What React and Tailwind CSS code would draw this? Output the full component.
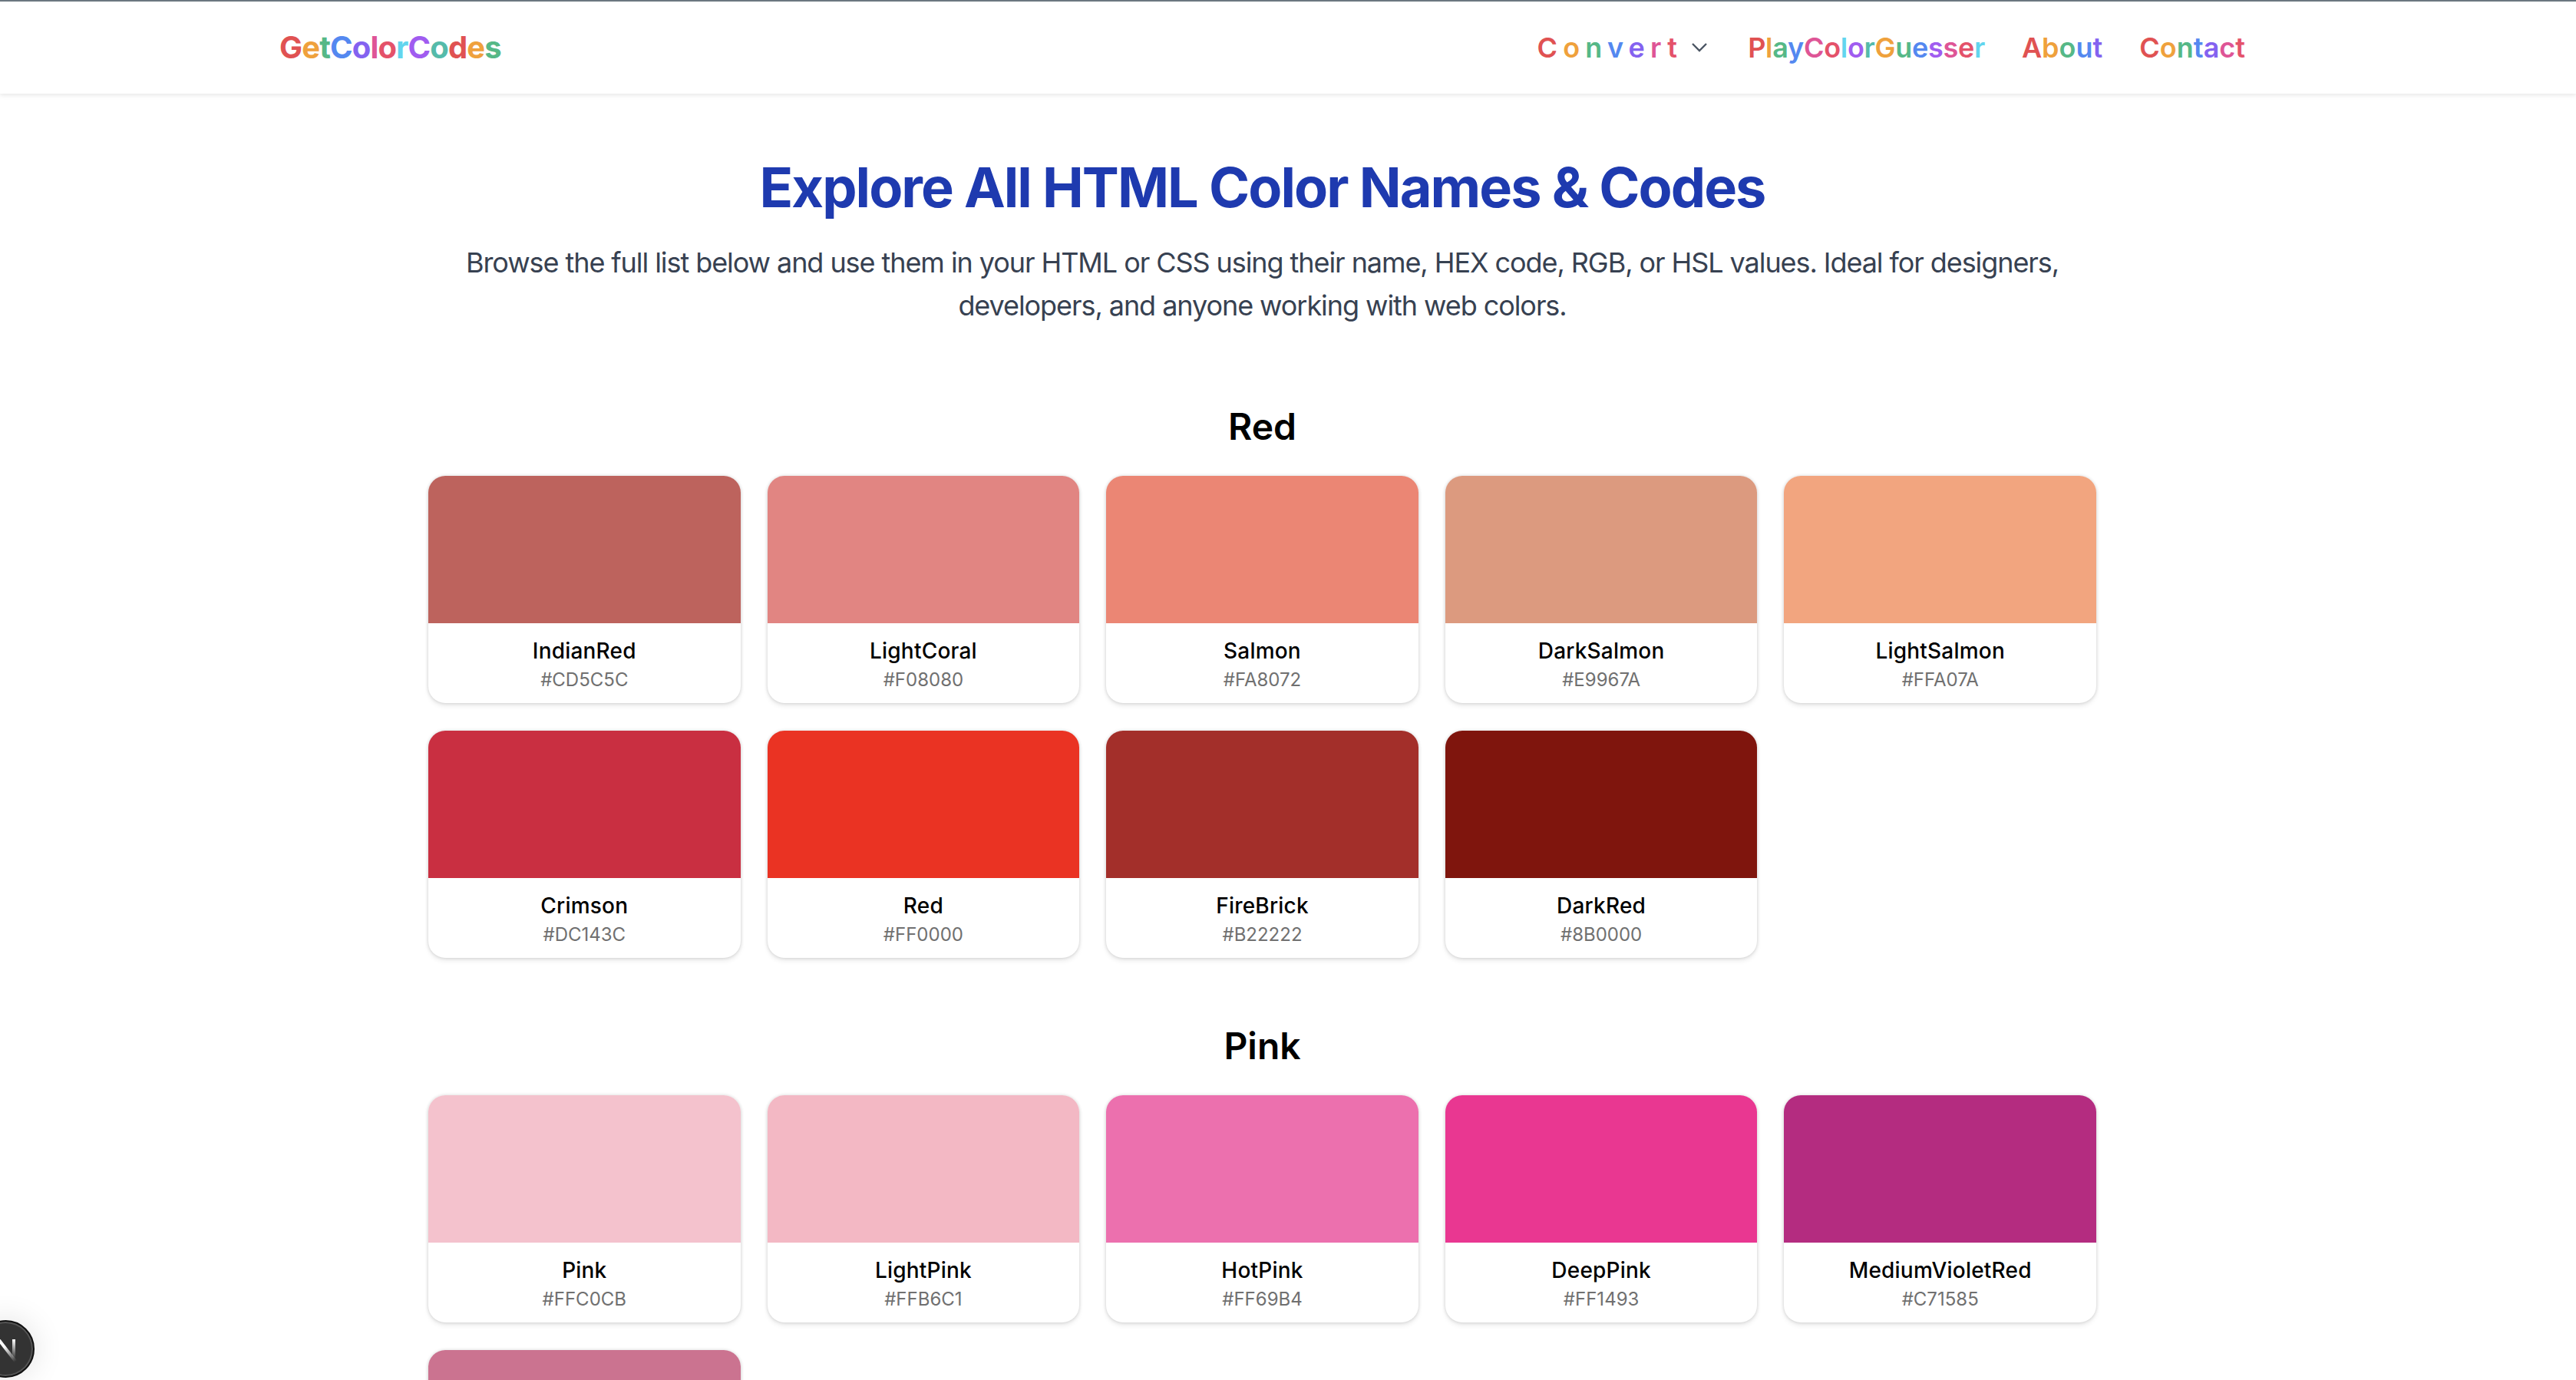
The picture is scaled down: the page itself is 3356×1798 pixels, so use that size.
import React from 'react';

const palette = {
    red: '#e05252',
    orange: '#efa13c',
    green: '#56b887',
    blue: '#5488f0',
    indigo: '#8462f0',
    pink: '#de5596',
    rose: '#e4526a',
    cyan: '#62d5ee',
    purple: '#a05cf0',
    teal: '#55bbaa',
};

const cycle = ['red', 'orange', 'green', 'blue', 'indigo', 'pink', 'rose', 'cyan', 'purple', 'teal'];
const playCycle = ['red', 'orange', 'green', 'blue', 'pink', 'rose', 'cyan', 'purple', 'teal', 'orange', 'green', 'blue', 'purple', 'pink', 'rose', 'cyan'];

const sections = [
    {
        title: 'Red',
        colors: [
            ['IndianRed', '#CD5C5C', '#bd635d'],
            ['LightCoral', '#F08080', '#e18582'],
            ['Salmon', '#FA8072', '#eb8674'],
            ['DarkSalmon', '#E9967A', '#dc9a7f'],
            ['LightSalmon', '#FFA07A', '#f2a57f'],
            ['Crimson', '#DC143C', '#c92f41'],
            ['Red', '#FF0000', '#ea3323'],
            ['FireBrick', '#B22222', '#a32f2a'],
            ['DarkRed', '#8B0000', '#7f150d'],
        ],
    },
    {
        title: 'Pink',
        colors: [
            ['Pink', '#FFC0CB', '#f4c2cd'],
            ['LightPink', '#FFB6C1', '#f3b8c4'],
            ['HotPink', '#FF69B4', '#ec70ae'],
            ['DeepPink', '#FF1493', '#e93791'],
            ['MediumVioletRed', '#C71585', '#b42c80'],
            // below the fold, only the swatch shows
            [null, null, '#cb7390'],
        ],
    },
];

function Rainbow({ text, colors = cycle, className = '' }) {
    return (
        <span className={className}>
            {text.split('').map((ch, i) => (
                <span key={i} style={{ color: palette[colors[i % colors.length]] }}>{ch}</span>
            ))}
        </span>
    );
}

function ColorCard({ name, hex, shown }) {
    return (
        <div className="h-[296px] overflow-hidden rounded-[22px] bg-white shadow-[0_0_4px_rgba(0,0,0,0.16),0_4px_6px_rgba(0,0,0,0.08)]">
            <div className="h-48" style={{ backgroundColor: shown }} />
            {name && (
                <div className="pt-4 text-center">
                    <div className="text-[28px] leading-10 font-medium tracking-[0.2px] text-black">{name}</div>
                    <div className="mt-0.5 text-2xl leading-8 text-[#707070]">{hex}</div>
                </div>
            )}
        </div>
    );
}

function NextBadge() {
    return (
        <div className="absolute bottom-[3px] -left-[30px] size-[75px] rounded-full border-2 border-[#111] bg-[#333] shadow-[0_0_40px_rgba(0,0,0,0.12),inset_0_0_0_2px_#555]">
            <svg width="71" height="71" viewBox="0 0 71 71" fill="none">
                <defs>
                    <linearGradient id="nDiag" x1="27" y1="25" x2="48" y2="52" gradientUnits="userSpaceOnUse">
                        <stop offset="0.3" stopColor="#fff" />
                        <stop offset="1" stopColor="#fff" stopOpacity="0" />
                    </linearGradient>
                    <linearGradient id="nStem" x1="46" y1="23" x2="46" y2="48" gradientUnits="userSpaceOnUse">
                        <stop stopColor="#fff" />
                        <stop offset="1" stopColor="#fff" stopOpacity="0" />
                    </linearGradient>
                </defs>
                <path d="M26 23l24 31" stroke="url(#nDiag)" strokeWidth="4" />
                <path d="M46 23v26" stroke="url(#nStem)" strokeWidth="4" />
            </svg>
        </div>
    );
}

export default function App() {
    return (
        <div className="relative h-[1798px] overflow-hidden bg-white font-['Inter',sans-serif]">
            <header className="h-[122px] border-t-2 border-[#6b7780] bg-white shadow-[0_2px_6px_rgba(0,0,0,0.1)]">
                <div className="flex h-[120px] w-[3289px] items-center justify-between px-[364px]">
                    <Rainbow text="GetColorCodes" className="text-[40px] font-bold tracking-[-0.85px]" />
                    <nav className="flex items-center gap-12 text-4xl font-semibold">
                        <div className="mr-[5px] flex items-center gap-3">
                            <Rainbow text="Convert" className="tracking-[0.2em]" />
                            <svg width="20" height="12" viewBox="0 0 20 12" fill="none" stroke="#4b5563" strokeWidth="2.4">
                                <path d="M1 1l9 9 9-9" />
                            </svg>
                        </div>
                        <Rainbow text="PlayColorGuesser" colors={playCycle} className="tracking-[-0.3px]" />
                        <Rainbow text="About" />
                        <Rainbow text="Contact" />
                    </nav>
                </div>
            </header>

            <main className="flex w-[3289px] flex-col items-center">
                <div className="w-[2173px]">
                    <h1 className="mt-[82px] text-center text-[72px] leading-[80px] font-bold tracking-[-1.95px] text-[#1e3aaf]">
                        Explore All HTML Color Names &amp; Codes
                    </h1>
                    <p className="mt-[30px] text-center text-4xl leading-14 tracking-[-1.07px] text-[#374151]">
                        Browse the full list below and use them in your HTML or CSS using their name, HEX code, RGB, or HSL values. Ideal for designers, developers, and anyone working with web colors.
                    </p>
                    <div className="mt-[98px] flex flex-col gap-[83px]">
                        {sections.map((section) => (
                            <section key={section.title}>
                                <h2 className="mb-8 text-center text-5xl leading-16 font-semibold text-black">{section.title}</h2>
                                <div className="grid grid-cols-5 gap-x-[35px] gap-y-9">
                                    {section.colors.map(([name, hex, shown]) => (
                                        <ColorCard key={shown} name={name} hex={hex} shown={shown} />
                                    ))}
                                </div>
                            </section>
                        ))}
                    </div>
                </div>
            </main>

            <NextBadge />
        </div>
    );
}
